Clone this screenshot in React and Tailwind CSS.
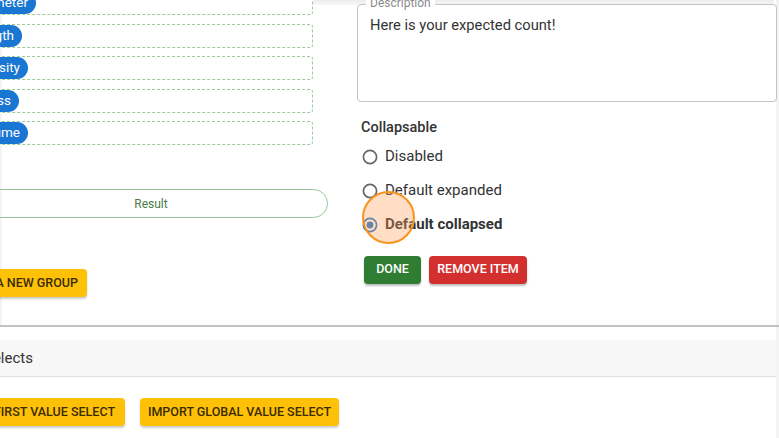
import React from "react";

const chips = [
  { label: "Diameter", w: 61 },
  { label: "Length", w: 47 },
  { label: "Density", w: 53 },
  { label: "Mass", w: 44 },
  { label: "Volume", w: 53 },
];

function Radio({ checked, label }) {
  return (
    <div className="flex items-center h-[20px]">
      <div className="w-[20px] h-[20px] -ml-[3px] flex items-center justify-center">
        {checked ? (
          <svg width="16" height="16" viewBox="0 0 16 16">
            <circle cx="8" cy="8" r="6.6" fill="none" stroke="#1976d2" strokeWidth="1.7" />
            <circle cx="8" cy="8" r="3.4" fill="#1976d2" />
          </svg>
        ) : (
          <svg width="16" height="16" viewBox="0 0 16 16">
            <circle cx="8" cy="8" r="6.6" fill="none" stroke="#666" strokeWidth="1.7" />
          </svg>
        )}
      </div>
      <span
        className={
          "ml-[5px] text-[15px] text-[#333] leading-none " + (checked ? "font-bold" : "font-normal")
        }
      >
        {label}
      </span>
    </div>
  );
}

export default function App() {
  return (
    <div
      className="relative w-[779px] h-[438px] overflow-hidden bg-[#f3f3f3]"
      style={{ fontFamily: "Roboto, 'Liberation Sans', sans-serif" }}
    >
      {/* Top shadow band */}
      <div className="absolute top-0 left-[313px] right-[5px] h-[5px] bg-gradient-to-b from-[#ececec] to-[#f8f8f8]" />

      {/* Card */}
      <div className="ml-[2px] mr-[3px] h-[325px] bg-white flex">
        {/* Left column */}
        <div className="w-[354px] -ml-[28px] shrink-0 flex flex-col -mt-[9px]">
          <div className="flex flex-col gap-[8.5px] mr-[15px]">
            {chips.map((c) => (
              <div
                key={c.label}
                className="h-[24px] border border-dashed border-[#9ccb9c] rounded-[3px] flex items-center"
              >
                <div className="flex justify-end" style={{ width: c.w }}>
                  <div className="h-[22px] shrink-0 px-[8px] rounded-full bg-[#1976d2] text-white text-[13.5px] flex items-center leading-none">
                    {c.label}
                  </div>
                </div>
              </div>
            ))}
          </div>
          <div className="mt-[44px] h-[29px] rounded-full border border-[#9cc49c] flex items-center justify-center text-[12px] text-[#4a7d45]">
            Result
          </div>
          <div className="mt-[51px] flex">
            <div className="w-[113px] flex justify-end">
              <div className="shrink-0 h-[28px] px-[9px] rounded-[4px] bg-[#ffc107] text-[#3a2c00] text-[12.5px] font-medium uppercase flex items-center shadow-[0_2px_2px_rgba(0,0,0,0.2)] whitespace-nowrap">
                Add a new group
              </div>
            </div>
          </div>
        </div>

        {/* Right column */}
        <div className="flex-1 ml-[29px] pt-[4px] flex flex-col">
          <div className="relative h-[98px] border border-[#c4c4c4] rounded-[4px] px-[12px] pt-[9px] -mr-[1px]">
            <div className="absolute z-10 -top-[8px] left-[8px] px-[4px] bg-white text-[12px] text-[#8a8a8a] leading-none">
              Description
            </div>
            <div className="text-[14.7px] text-[#333]">Here is your expected count!</div>
          </div>
          <div className="ml-[4px] mt-[19px] text-[14.5px] font-medium text-[#333] leading-none">Collapsable</div>
          <div className="ml-[6px] mt-[11px] flex flex-col gap-[14px]">
            <Radio label="Disabled" />
            <Radio label="Default expanded" />
            <Radio checked label="Default collapsed" />
          </div>
          <div className="ml-[7px] mt-[21px] flex gap-[8px]">
            <button className="h-[28px] w-[57px] rounded-[4px] bg-[#2e7d32] text-white text-[12.5px] font-medium uppercase shadow-[0_2px_2px_rgba(0,0,0,0.25)]">
              Done
            </button>
            <button className="h-[28px] w-[98px] rounded-[4px] bg-[#d32f2f] text-white text-[12.5px] font-medium uppercase shadow-[0_2px_2px_rgba(0,0,0,0.25)]">
              Remove item
            </button>
          </div>
        </div>
      </div>

      {/* Divider */}
      <div className="h-[2px] bg-[#c2c2c2]" />

      {/* Lower section */}
      <div className="mr-[3px] h-[111px] bg-white pt-[13px]">
        <div className="h-[37px] bg-[#f7f7f7] border-b border-[#e0e0e0] flex items-center">
          <span className="-ml-[16px] text-[15px] text-[#333]">Selects</span>
        </div>
        <div className="mt-[21px] flex gap-[15px]">
          <div className="w-[125px] flex justify-end">
            <div className="shrink-0 h-[28px] px-[10px] rounded-[4px] bg-[#ffc107] text-[#3a2c00] text-[12.5px] font-medium uppercase flex items-center shadow-[0_2px_2px_rgba(0,0,0,0.2)] whitespace-nowrap">
              Import first value select
            </div>
          </div>
          <div className="w-[199px] h-[28px] rounded-[4px] bg-[#ffc107] text-[#3a2c00] text-[12.5px] font-medium uppercase flex items-center justify-center shadow-[0_2px_2px_rgba(0,0,0,0.2)] whitespace-nowrap">
            Import global value select
          </div>
        </div>
      </div>

      {/* Click highlight */}
      <div className="absolute left-[362px] top-[191px] w-[53px] h-[53px] rounded-full border-2 border-[#f7931e] bg-[rgba(255,160,90,0.35)]" />
    </div>
  );
}
